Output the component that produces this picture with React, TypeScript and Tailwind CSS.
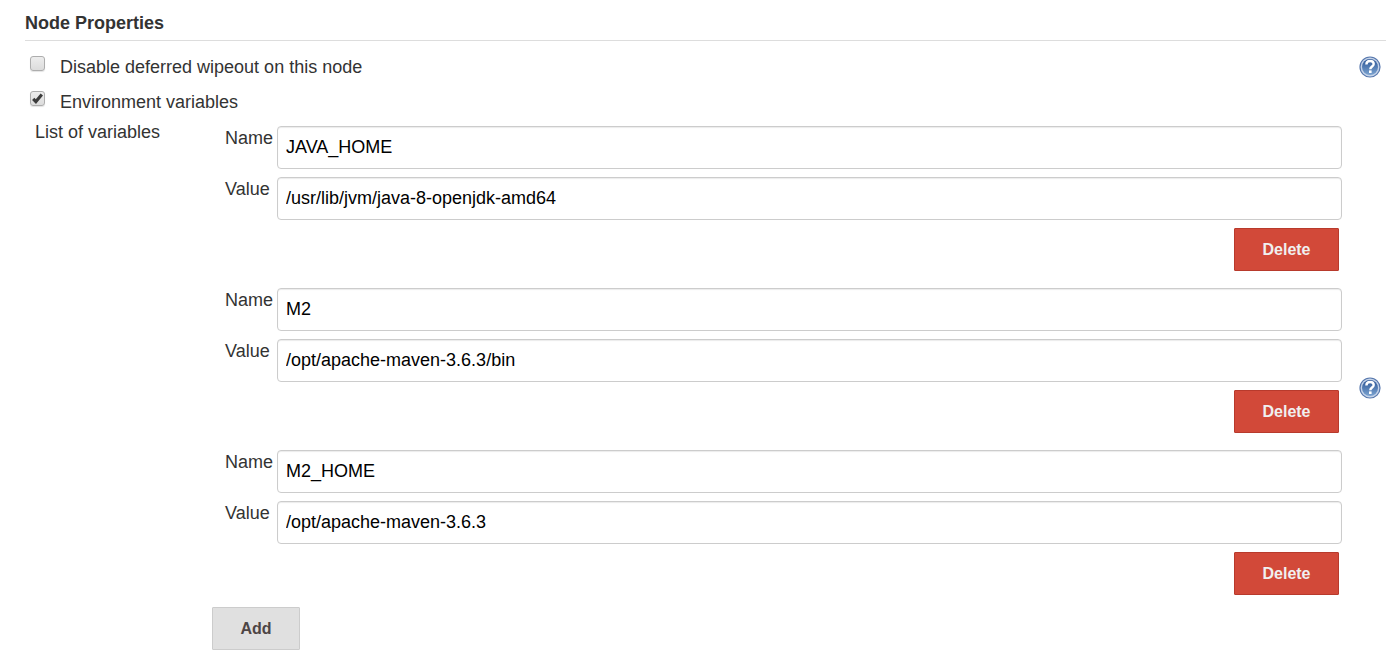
import { useState } from 'react';

interface EnvVariable {
	id: number;
	name: string;
	value: string;
}

const INITIAL_VARIABLES: EnvVariable[] = [
	{ id: 1, name: 'JAVA_HOME', value: '/usr/lib/jvm/java-8-openjdk-amd64' },
	{ id: 2, name: 'M2', value: '/opt/apache-maven-3.6.3/bin' },
	{ id: 3, name: 'M2_HOME', value: '/opt/apache-maven-3.6.3' },
];

function HelpButton({ label }: { label: string }) {
	return (
		<button type="button" aria-label={label} className="block shrink-0 cursor-pointer">
			<svg viewBox="0 0 22 22" className="size-[22px]">
				<defs>
					<linearGradient id="help-fill" x1="0" y1="0" x2="0" y2="1">
						<stop offset="0" stopColor="#2c5596" />
						<stop offset="1" stopColor="#7ba3d0" />
					</linearGradient>
				</defs>
				<circle cx="11" cy="11" r="10" fill="#c5d3e8" stroke="#5677ad" strokeWidth="1.2" />
				<circle cx="11" cy="11" r="8" fill="url(#help-fill)" />
				<path
					d="M7.4 8.4C7.4 6.2 9 5 11.1 5S14.7 6.2 14.7 8.1C14.7 10.5 11.3 10.6 11.3 13.2"
					fill="none"
					stroke="#fff"
					strokeWidth="2.4"
				/>
				<rect x="10" y="14.4" width="2.6" height="2.6" fill="#fff" />
			</svg>
		</button>
	);
}

interface PropertyCheckboxProps {
	label: string;
	defaultChecked?: boolean;
}

function PropertyCheckbox({ label, defaultChecked = false }: PropertyCheckboxProps) {
	return (
		<label className="flex items-start gap-[15px] pl-[5px]">
			<span className="grid shrink-0">
				<input
					type="checkbox"
					defaultChecked={defaultChecked}
					className="peer col-start-1 row-start-1 size-[15px] appearance-none rounded-[3px] border border-[#adadad] bg-linear-to-b from-[#ededed] to-[#dcdcdc] shadow-[0_1px_1px_#e4e4e4]"
				/>
				<svg
					viewBox="0 0 15 15"
					className="pointer-events-none invisible col-start-1 row-start-1 size-[15px] peer-checked:visible">
					<path d="M3.2 7.8 5.9 10.6 11.8 3.6" fill="none" stroke="#3c3c3c" strokeWidth="3.1" />
				</svg>
			</span>
			<span className="leading-[22px]">{label}</span>
		</label>
	);
}

interface TextFieldProps {
	label: string;
	value: string;
	onChange: (value: string) => void;
}

function TextField({ label, value, onChange }: TextFieldProps) {
	return (
		<label className="flex items-start">
			<span className="w-[52px] shrink-0 leading-6">{label}</span>
			<input
				type="text"
				value={value}
				onChange={(e) => onChange(e.target.value)}
				className="h-[43px] min-w-0 flex-1 rounded-[4px] border border-[#ccc] bg-white px-2 text-black shadow-[inset_0_1px_1px_rgba(0,0,0,0.08)]"
			/>
		</label>
	);
}

export default function App() {
	const [variables, setVariables] = useState(INITIAL_VARIABLES);

	const update = (id: number, patch: Partial<EnvVariable>) =>
		setVariables((prev) => prev.map((v) => (v.id === id ? { ...v, ...patch } : v)));

	const remove = (id: number) => setVariables((prev) => prev.filter((v) => v.id !== id));

	const add = () => setVariables((prev) => [...prev, { id: Date.now(), name: '', value: '' }]);

	return (
		<main className="bg-white pt-[13px] pr-[5px] pb-2 pl-[25px] font-['Liberation_Sans',Arial,sans-serif] text-[18px] text-[#333]">
			<h2 className="border-b border-[#ddd] pb-[6px] text-[18px] leading-[21px] font-bold">Node Properties</h2>

			<div className="mt-[15px] flex items-start justify-between pr-[5px]">
				<PropertyCheckbox label="Disable deferred wipeout on this node" />
				<HelpButton label="Help for deferred wipeout" />
			</div>
			<div className="mt-[13px]">
				<PropertyCheckbox label="Environment variables" defaultChecked />
			</div>

			<section className="mt-[13px] flex items-center pr-[5px]">
				<div className="w-[187px] shrink-0 self-start pl-[10px] leading-3">List of variables</div>
				<div className="min-w-0 flex-1">
					<div className="flex flex-col gap-[17px] pl-[13px]">
						{variables.map((variable) => (
							<div key={variable.id} className="flex flex-col gap-2">
								<TextField
									label="Name"
									value={variable.name}
									onChange={(name) => update(variable.id, { name })}
								/>
								<TextField
									label="Value"
									value={variable.value}
									onChange={(value) => update(variable.id, { value })}
								/>
								<button
									type="button"
									onClick={() => remove(variable.id)}
									className="mr-[3px] h-[43px] w-[105px] cursor-pointer self-end rounded-[1px] border border-[#b83a2c] bg-[#d24939] text-[16px] font-bold text-[#f0f0f0]">
									Delete
								</button>
							</div>
						))}
					</div>
					<button
						type="button"
						onClick={add}
						className="mt-3 block h-[43px] w-[88px] cursor-pointer rounded-[1px] border border-[#ccc] bg-[#e0e0e0] text-[16px] font-bold text-[#4d4545]">
						Add
					</button>
				</div>
				<div className="ml-[17px] shrink-0">
					<HelpButton label="Help for list of variables" />
				</div>
			</section>
		</main>
	);
}
